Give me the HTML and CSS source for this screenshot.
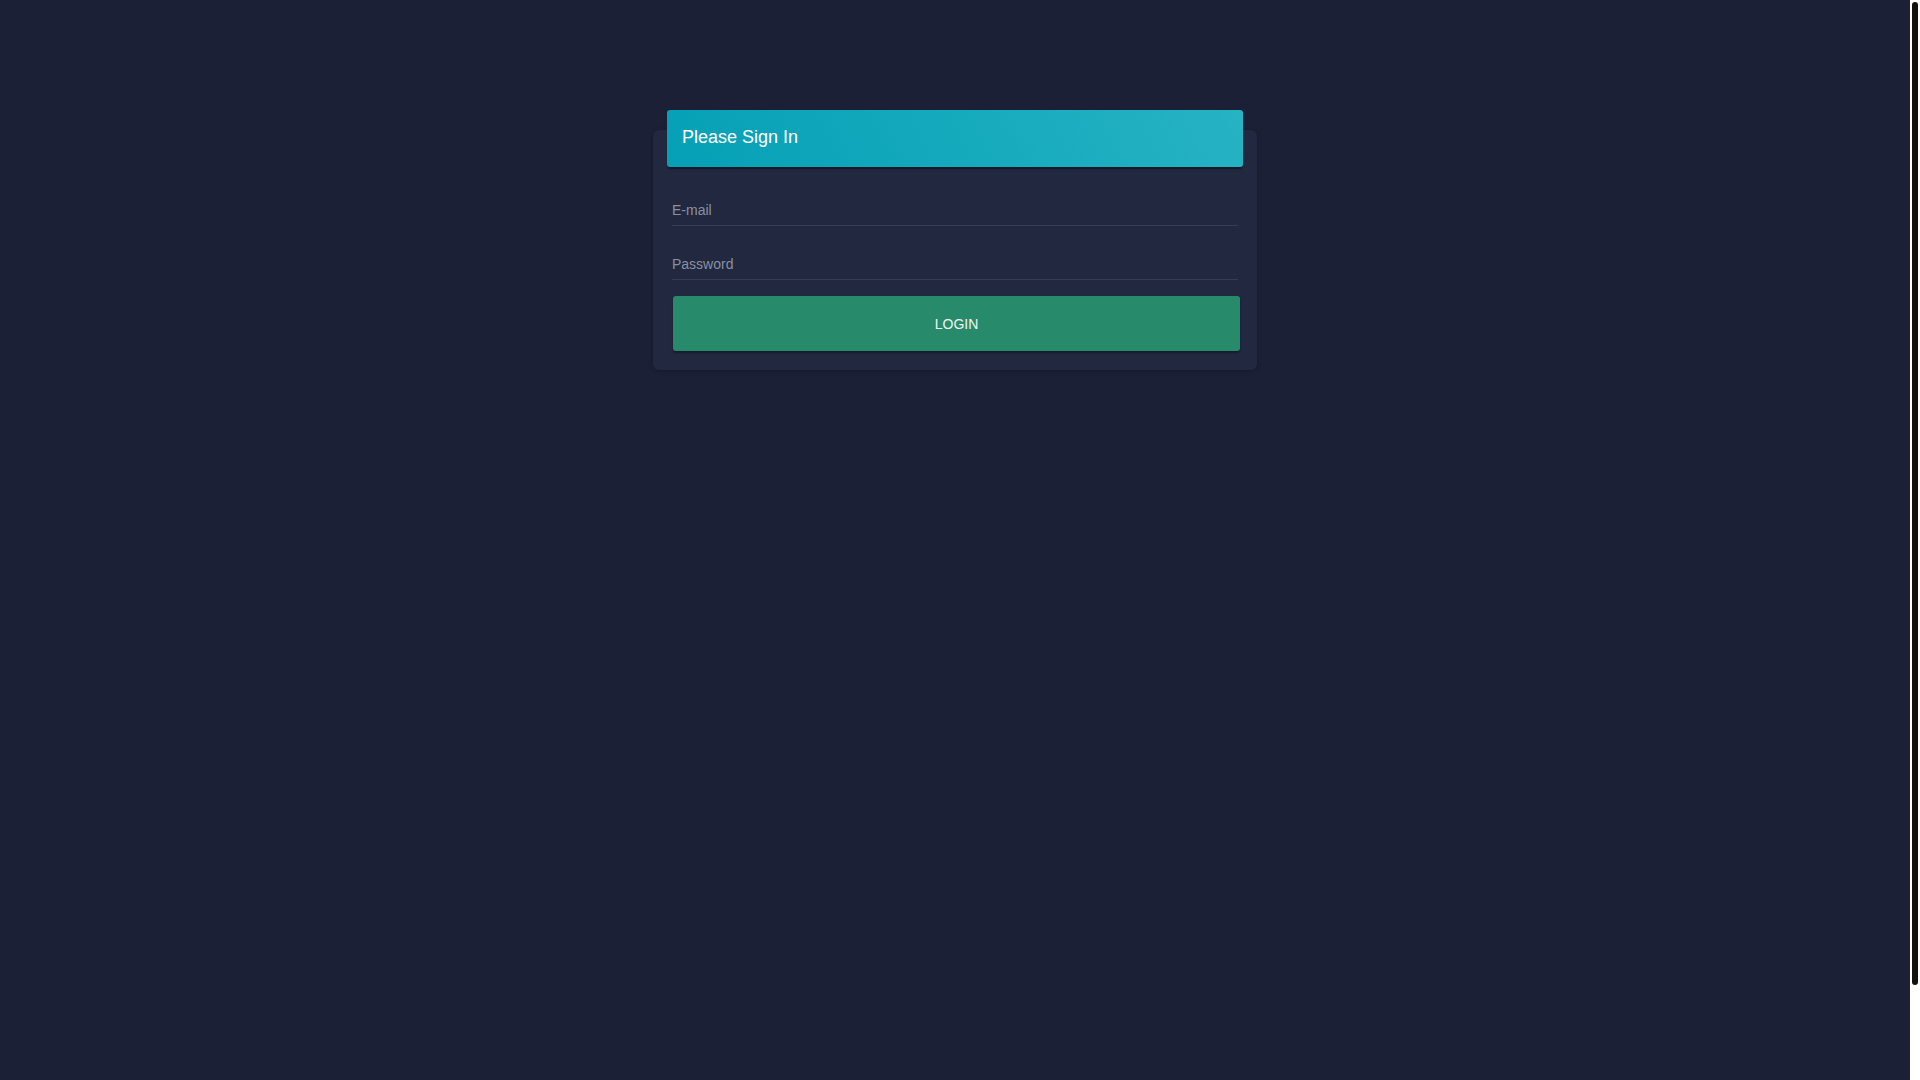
FILE: index.html
```html
<!DOCTYPE html>
<html lang="en">
<head>
<meta charset="utf-8">
<title>Please Sign In</title>
<link rel="stylesheet" href="styles.css">
</head>
<body>
<div class="page">
  <div class="card">
    <div class="card-header">Please Sign In</div>
    <form class="card-body">
      <input class="field" type="email" placeholder="E-mail">
      <input class="field field-password" type="password" placeholder="Password">
      <button class="btn-login" type="button">Login</button>
    </form>
  </div>
</div>
<div class="scrollbar" aria-hidden="true"><div class="scrollbar-thumb"></div></div>
</body>
</html>
```

FILE: styles.css
```css
html {
  background: #1b2036;
}
body {
  margin: 0;
  background: #1b2036;
  font-family: "Liberation Sans", Arial, sans-serif;
  overflow: hidden;
}
.page {
  width: calc(100% - 10px);
  height: 100vh;
  box-sizing: border-box;
  padding-top: 130px;
  display: flex;
  justify-content: center;
  align-items: flex-start;
}
.scrollbar {
  position: fixed;
  top: 0;
  right: 0;
  width: 10px;
  height: 100vh;
  background: #ffffff;
}
.scrollbar-thumb {
  box-sizing: border-box;
  height: 987px;
  background: #111111;
  border: 2px solid #ffffff;
  border-radius: 5px;
}
.card {
  width: 604px;
  background: #212840;
  border-radius: 6px;
  box-shadow: 0 1px 4px rgba(0, 0, 0, 0.25);
}
.card-header {
  margin: -20px 14px 0;
  padding: 14px 15px 16px;
  line-height: 27px;
  font-size: 18px;
  color: #ffffff;
  border-radius: 3px;
  background: linear-gradient(60deg, #05a0b6, #26b3c4);
  box-shadow: 0 3px 2px -1px rgba(0, 0, 0, 0.45);
}
.card-body {
  display: flex;
  flex-direction: column;
  padding: 23px 19px 19px;
  margin: 0;
}
.field {
  display: block;
  box-sizing: border-box;
  width: 100%;
  height: 36px;
  padding: 7px 0 3px;
  margin: 0;
  border: 0;
  border-bottom: 1px solid #363e54;
  background: transparent;
  color: #c8ccd6;
  font-family: "Liberation Sans", Arial, sans-serif;
  font-size: 14px;
  outline: none;
}
.field::placeholder {
  color: #8a90a0;
  opacity: 1;
}
.field-password {
  margin-top: 18px;
}
.btn-login {
  margin: 16px -2px 0 1px;
  height: 55px;
  border: 0;
  border-radius: 3px;
  background: #278b6b;
  color: #eef5f2;
  font-family: "Liberation Sans", Arial, sans-serif;
  font-size: 14px;
  text-transform: uppercase;
  box-shadow: 0 2px 2px rgba(0, 0, 0, 0.3);
  cursor: pointer;
}
```
